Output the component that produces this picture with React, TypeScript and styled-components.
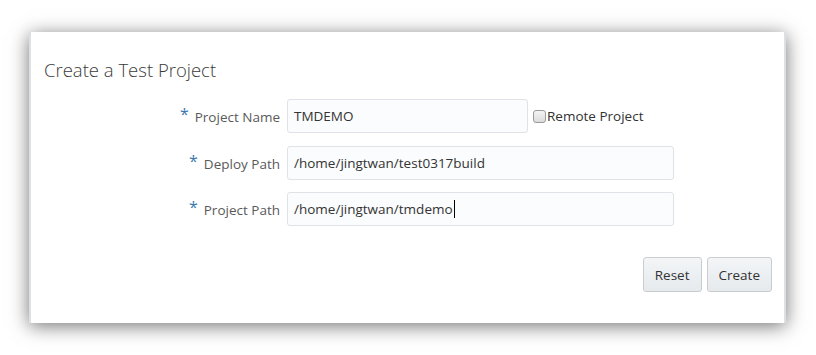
import styled, { createGlobalStyle } from "styled-components";

const GlobalStyle = createGlobalStyle`
  html, body {
    margin: 0;
    padding: 0;
    background: #ffffff;
  }
  body {
    font-family: "Open Sans", "Noto Sans", "Liberation Sans", sans-serif;
  }
`;

interface FieldRow {
  label: string;
  value: string;
  wide: boolean;
  focused?: boolean;
  remote?: boolean;
}

const rows: FieldRow[] = [
  { label: "Project Name", value: "TMDEMO", wide: false, remote: true },
  { label: "Deploy Path", value: "/home/jingtwan/test0317build", wide: true },
  { label: "Project Path", value: "/home/jingtwan/tmdemo", wide: true, focused: true },
];

const App = () => {
  return (
    <Page>
      <GlobalStyle />
      <Card>
        <Title>Create a Test Project</Title>
        <Form>
          {rows.map((row) => (
            <Row key={row.label}>
              <Label>
                <Required>*</Required>
                {row.label}
              </Label>
              <Control>
                <Field $wide={row.wide}>
                  {row.value}
                  {row.focused && <Caret />}
                </Field>
                {row.remote && (
                  <CheckLabel>
                    <Checkbox />
                    Remote Project
                  </CheckLabel>
                )}
              </Control>
            </Row>
          ))}
        </Form>
        <Actions>
          <Button>Reset</Button>
          <Button>Create</Button>
        </Actions>
      </Card>
    </Page>
  );
};

export default App;

const Page = styled.div`
  padding: 32px 0 0 29px;
  height: 323px;
`;

const Card = styled.div`
  box-sizing: border-box;
  width: 757px;
  height: 291px;
  background: #ffffff;
  border-left: 2px solid #dde1e4;
  border-right: 2px solid #dde1e4;
  box-shadow: 0 3px 18px rgba(0, 0, 0, 0.55);
  padding: 25px 12px 0 13px;
  display: flex;
  flex-direction: column;
`;

const Title = styled.h1`
  margin: 0;
  font-size: 18.5px;
  font-weight: 300;
  color: #3a3a3a;
  line-height: 26px;
`;

const Form = styled.div`
  margin-top: 16px;
  display: flex;
  flex-direction: column;
  gap: 12.5px;
`;

const Row = styled.div`
  display: grid;
  grid-template-columns: 236px 1fr;
  column-gap: 7px;
  align-items: center;
`;

const Label = styled.div`
  text-align: right;
  font-size: 13.5px;
  color: #5a5a5a;
  white-space: nowrap;
`;

const Required = styled.span`
  color: #3b77b0;
  font-size: 16px;
  margin-right: 6px;
  position: relative;
  top: -2px;
`;

const Control = styled.div`
  display: flex;
  align-items: center;
`;

const Field = styled.div<{ $wide: boolean }>`
  box-sizing: border-box;
  width: ${(p) => (p.$wide ? "387px" : "241px")};
  height: 34px;
  border: 1px solid #dfe3e7;
  border-radius: 3px;
  background: #fbfcfd;
  padding: 0 6px;
  display: flex;
  align-items: center;
  font-size: 13.5px;
  color: #333333;
`;

const Caret = styled.span`
  display: inline-block;
  width: 1px;
  height: 18px;
  background: #000000;
  margin-left: 1px;
`;

const CheckLabel = styled.label`
  display: flex;
  align-items: center;
  margin-left: 5px;
  font-size: 13.5px;
  color: #333333;
`;

const Checkbox = styled.span`
  box-sizing: border-box;
  width: 13px;
  height: 13px;
  border: 1px solid #9a9a9a;
  border-radius: 3px;
  background: linear-gradient(#f4f4f4, #dcdcdc);
  margin-right: 1px;
`;

const Actions = styled.div`
  margin-top: 31px;
  display: flex;
  justify-content: flex-end;
  gap: 5px;
`;

const Button = styled.button`
  box-sizing: border-box;
  height: 35px;
  padding: 0 11px;
  border: 1px solid #c8cdd2;
  border-radius: 3px;
  background: linear-gradient(#f3f5f7, #e6eaed);
  font-family: inherit;
  font-size: 13.5px;
  color: #333333;
`;
